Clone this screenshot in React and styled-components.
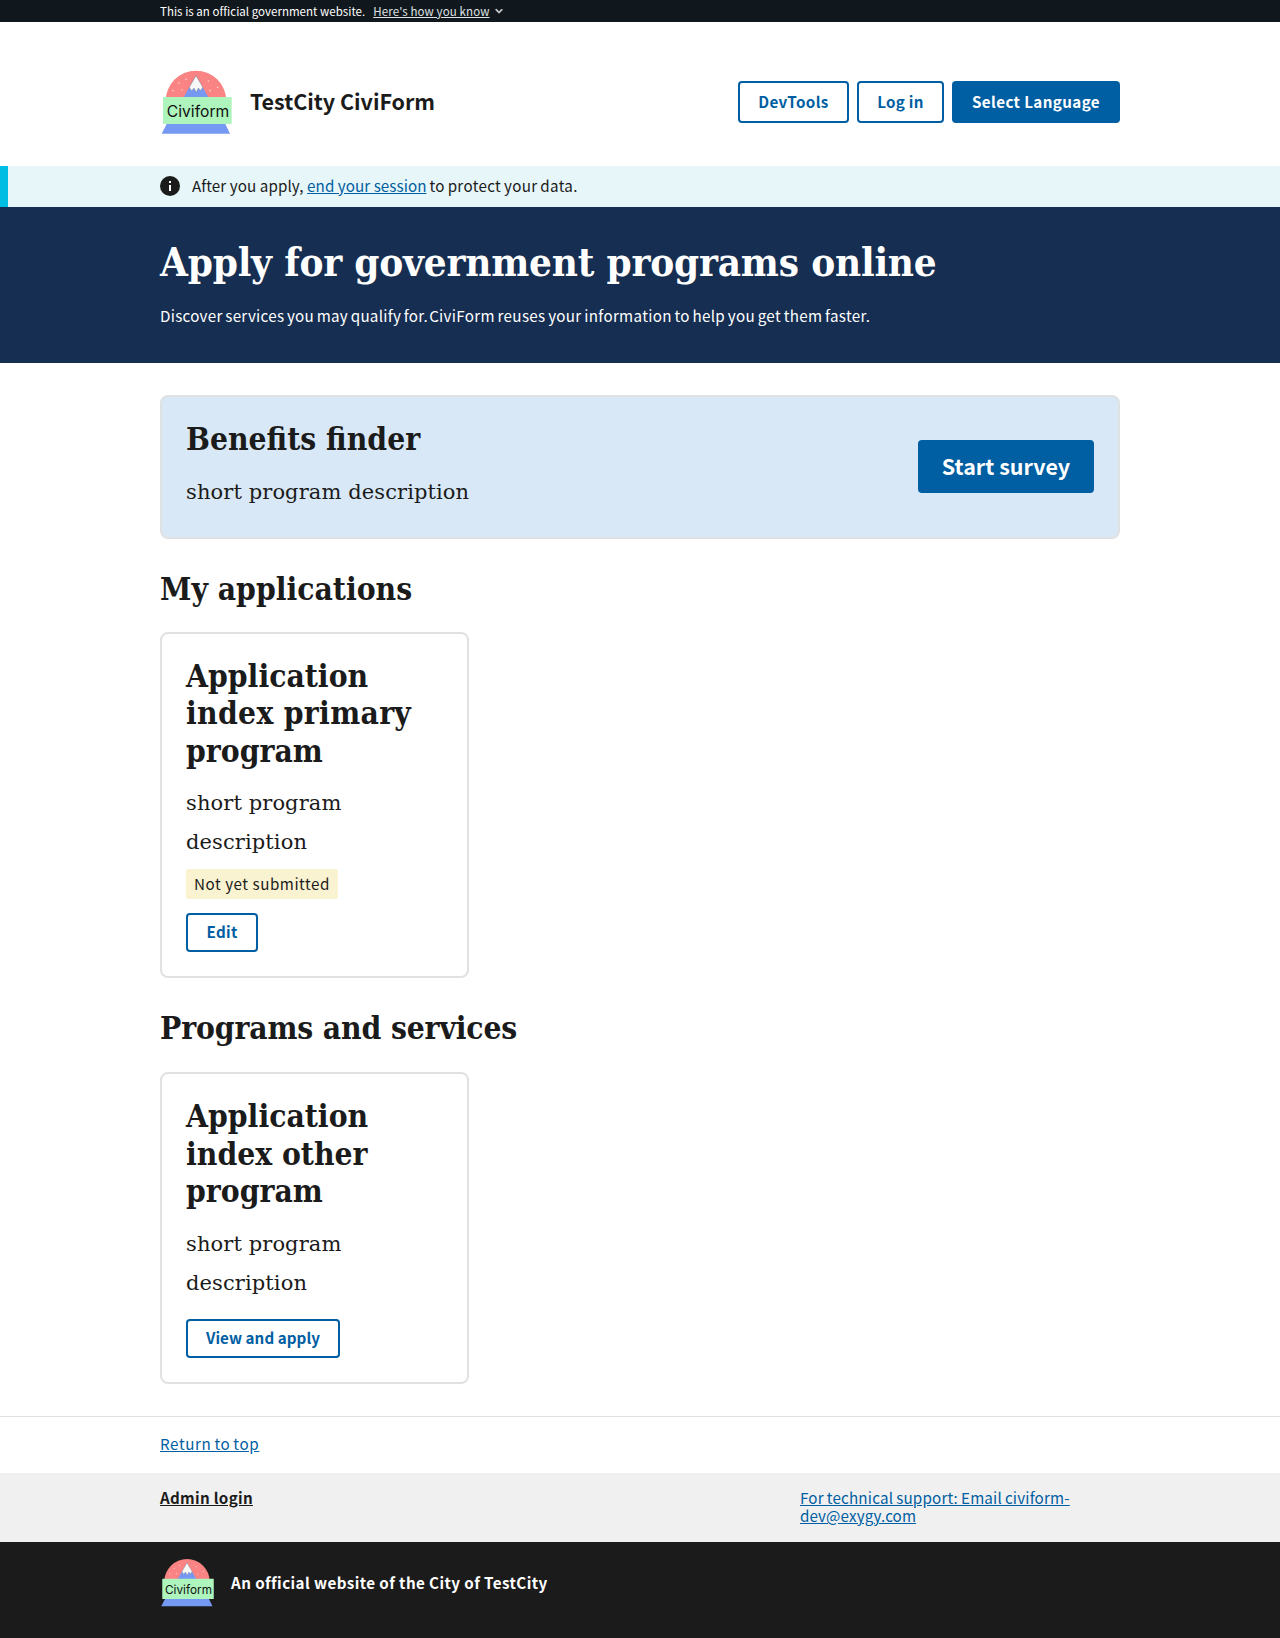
import React from "react";
import styled, { createGlobalStyle } from "styled-components";

const sans = '"Noto Sans CJK SC", "Noto Sans", sans-serif';
const serif = '"DejaVu Serif Condensed", "DejaVu Serif", serif';

const GlobalStyle = createGlobalStyle`
  *, *::before, *::after { box-sizing: border-box; }
  body { margin: 0; background: #fff; color: #1b1b1b; font-family: ${sans}; font-size: 15.2px; }
  h1, h2, h3, p { margin: 0; }
`;

const Container = styled.div`
  width: 960px;
  margin: 0 auto;
  display: flex;
`;

const T = styled.span`
  letter-spacing: ${(p) => p.$track || 0}px;
  word-spacing: ${(p) => p.$word || 0}px;
  white-space: pre;
`;

const GovBanner = styled.div`
  background: #11181d;
  color: #fff;
  height: 22px;
  font-size: 11.5px;
  line-height: 22px;
`;
const GovInner = styled(Container)`
  align-items: center;
  gap: 8px;
`;
const GovLink = styled.a`
  color: #dfe1e2;
  display: inline-flex;
  align-items: center;
  gap: 2px;
  text-decoration: underline;
`;

const Header = styled.header`
  height: 144px;
`;
const HeaderInner = styled(Container)`
  padding-top: 46px;
  justify-content: space-between;
`;
const Brand = styled.div`
  display: flex;
  gap: 18px;
  font-size: 21.5px;
  font-weight: 700;
  line-height: 66px;
`;
const Nav = styled.nav`
  display: flex;
  gap: 8px;
  padding-top: 13px;
`;

const Button = styled.button`
  height: ${(p) => p.$h || 42}px;
  width: ${(p) => p.$w}px;
  padding: 0 0 ${(p) => p.$lift || 0}px;
  border: 2px solid #005ea2;
  border-radius: 4px;
  background: ${(p) => (p.$solid ? "#005ea2" : "#fff")};
  color: ${(p) => (p.$solid ? "#fff" : "#005ea2")};
  font-family: inherit;
  font-weight: 700;
  font-size: ${(p) => p.$size || 15.2}px;
  line-height: 1;
`;

const Alert = styled.section`
  height: 41px;
  background: #e7f6f8;
  border-left: 8px solid #00bde3;
  padding: 10px 0 0 152px;
  display: flex;
  gap: 12px;
  line-height: 18px;
`;
const Link = styled.a`
  color: ${(p) => p.$color || "#005ea2"};
  font-weight: ${(p) => (p.$bold ? 700 : 400)};
  text-decoration: underline;
`;

const Hero = styled.section`
  height: 156px;
  background: #162e51;
  color: #fff;
`;
const HeroInner = styled(Container)`
  flex-direction: column;
  padding-top: 30px;
`;
const HeroTitle = styled.h1`
  font-family: ${serif};
  font-size: 40px;
  line-height: 50px;
`;
const HeroText = styled.p`
  margin-top: 18px;
  line-height: 20px;
`;

const Main = styled.main`
  width: 960px;
  margin: 0 auto;
`;
const Heading = styled.h2`
  font-family: ${serif};
  font-size: 31.5px;
  line-height: 37.6px;
`;
const SectionHeading = styled(Heading)`
  margin: 31px 0 ${(p) => p.$bottom}px;
`;
const Description = styled.p`
  margin-top: 15px;
  font-family: "DejaVu Serif", serif;
  font-size: 21px;
  line-height: 39px;
`;
const Finder = styled.section`
  margin-top: 32px;
  height: 144px;
  padding: 23px 24px 24px;
  border: 2px solid #dfe1e2;
  border-radius: 8px;
  background: #d9e8f6;
  display: flex;
  justify-content: space-between;
`;
const FinderAction = styled.div`
  display: flex;
  align-items: center;
`;
const Card = styled.article`
  width: 309px;
  height: ${(p) => p.$h}px;
  padding: 23px 24px 24px;
  border: 2px solid #dfe1e2;
  border-radius: 8px;
  display: flex;
  flex-direction: column;
  align-items: flex-start;
`;
const Tag = styled.span`
  margin: 7px 0 14px;
  height: 30px;
  padding: 0 8px;
  width: 152px;
  border-radius: 2px;
  background: #faf3d1;
  line-height: 28px;
`;
const CardAction = styled.div`
  padding-top: 16px;
`;

const ReturnBar = styled.div`
  margin-top: 32px;
  height: 57px;
  border-top: 1px solid #dfe1e2;
  padding-top: 16px;
  line-height: 20px;
`;
const FooterNav = styled.div`
  height: 69px;
  background: #f0f0f0;
  line-height: 18px;
`;
const FooterNavInner = styled(Container)`
  padding-top: 15px;
  display: grid;
  grid-template-columns: 640px 320px;
`;
const Identifier = styled.footer`
  height: 96px;
  background: #1b1b1b;
  color: #fff;
  font-weight: 700;
  line-height: 50px;
`;
const IdentifierInner = styled(Container)`
  padding-top: 14.6px;
  gap: 17px;
`;

const flakes = [[87, 69], [108, 58], [69, 92], [96, 90], [175, 63], [203, 82], [180, 92]];

function Logo({ width }) {
  return (
    <svg width={width} height={(width * 204) / 216} viewBox="30 24 216 204">
      <path d="M47 123 A91 91 0 0 1 229 123 Z" fill="#fa8383" />
      {flakes.map(([x, y]) => (
        <circle key={x} cx={x} cy={y} r="2.4" fill="#fdd5d5" />
      ))}
      <path d="M101 112 L138 47 L175 112 Z" fill="#7599f2" />
      <path d="M138 47 L158 81 L152 92 L145 84 L139 97 L132 84 L125 93 L118 82 Z" fill="#f7f7f7" stroke="#777" strokeWidth="1.2" />
      <rect x="39" y="111" width="206" height="81" fill="#adf4bd" />
      <path d="M50 192 H226 L240 221 H35 Z" fill="#7599f2" />
      <text x="50" y="172" fontFamily="Inter, sans-serif" fontSize="47" fontWeight="400" textLength="188" fill="#111">
        Civiform
      </text>
    </svg>
  );
}

const InfoIcon = () => (
  <svg width="20" height="20" viewBox="0 0 20 20">
    <circle cx="10" cy="10" r="10" fill="#1b1b1b" />
    <path d="M9 5h2v2H9zM9 9h2v6H9z" fill="#fff" />
  </svg>
);

const Chevron = () => (
  <svg width="14" height="14" viewBox="0 0 24 24">
    <path d="M16.59 8.59 12 13.17 7.41 8.59 6 10l6 6 6-6z" fill="#dfe1e2" stroke="#dfe1e2" />
  </svg>
);

const ShortDescription = () => (
  <Description>
    <T $track={0.1}>short program</T>
    <br />
    <T $track={0.1}>description</T>
  </Description>
);

export default function App() {
  return (
    <>
      <GlobalStyle />
      <GovBanner>
        <GovInner>
          <T $track={0.03}>This is an official government website.</T>
          <GovLink><T $track={0.12}>Here's how you know</T><Chevron /></GovLink>
        </GovInner>
      </GovBanner>
      <Header>
        <HeaderInner>
          <Brand><Logo width={72} /><T $track={-0.03}>TestCity CiviForm</T></Brand>
          <Nav>
            <Button $w={111}><T $track={0.35}>DevTools</T></Button>
            <Button $w={87}><T $track={0.25}>Log in</T></Button>
            <Button $w={168} $solid><T $track={0.38}>Select Language</T></Button>
          </Nav>
        </HeaderInner>
      </Header>
      <Alert>
        <InfoIcon />
        <p>
          <T $track={0.09}>After you apply, </T>
          <Link><T $track={0.06}>end your session</T></Link>
          <T $track={0.31} $word={-0.8}> to protect your data.</T>
        </p>
      </Alert>
      <Hero>
        <HeroInner>
          <HeroTitle><T $track={-0.2}>Apply for government programs online</T></HeroTitle>
          <HeroText>
            <T $track={0.27} $word={-1}>Discover services you may qualify for.</T>
            <T $track={0.31} $word={-2.6}> </T>
            <T $track={0.31} $word={-1}>CiviForm reuses your information to help you get them faster.</T>
          </HeroText>
        </HeroInner>
      </Hero>
      <Main>
        <Finder>
          <div>
            <Heading>Benefits finder</Heading>
            <Description><T $track={0.1}>short program description</T></Description>
          </div>
          <FinderAction><Button $w={176} $h={53} $solid $size={21.5} $lift={2}>Start survey</Button></FinderAction>
        </Finder>
        <SectionHeading $bottom={24}>My applications</SectionHeading>
        <Card $h={346}>
          <Heading>Application<br /><T $track={0.3}>index primary</T><br />program</Heading>
          <ShortDescription />
          <Tag><T $track={0.53}>Not yet submitted</T></Tag>
          <Button $w={72} $h={39} $lift={1}><T $track={0.3}>Edit</T></Button>
        </Card>
        <SectionHeading $bottom={25.8}><T $track={-0.14}>Programs and services</T></SectionHeading>
        <Card $h={312}>
          <Heading>Application<br />index other<br />program</Heading>
          <ShortDescription />
          <CardAction><Button $w={154} $h={39} $lift={1}><T $track={0.06}>View and apply</T></Button></CardAction>
        </Card>
      </Main>
      <ReturnBar><Container><Link><T $track={0.6} $word={-1}>Return to top</T></Link></Container></ReturnBar>
      <FooterNav>
        <FooterNavInner>
          <Link $color="#1b1b1b" $bold><T $track={0.3}>Admin login</T></Link>
          <Link><T $track={0.18} $word={-0.6}>For technical support: Email civiform-</T><br /><T $track={0.1}>dev@exygy.com</T></Link>
        </FooterNavInner>
      </FooterNav>
      <Identifier>
        <IdentifierInner><Logo width={54} /><T $track={0.41}>An official website of the City of TestCity</T></IdentifierInner>
      </Identifier>
    </>
  );
}
